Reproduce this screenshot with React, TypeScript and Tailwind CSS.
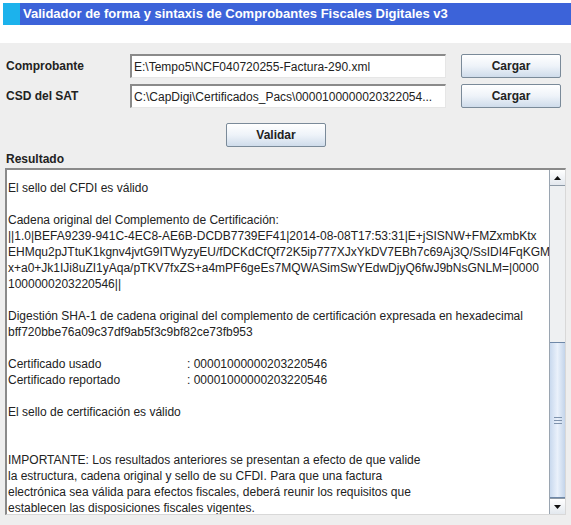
import React from 'react';

const lines: string[] = [
  'El sello del CFDI es válido',
  '',
  'Cadena original del Complemento de Certificación:',
  '||1.0|BEFA9239-941C-4EC8-AE6B-DCDB7739EF41|2014-08-08T17:53:31|E+jSISNW+FMZxmbKtx',
  'EHMqu2pJTtuK1kgnv4jvtG9ITWyzyEU/fDCKdCfQf72K5ip777XJxYkDV7EBh7c69Aj3Q/SsIDI4FqKGM',
  'x+a0+Jk1IJi8uZI1yAqa/pTKV7fxZS+a4mPF6geEs7MQWASimSwYEdwDjyQ6fwJ9bNsGNLM=|0000',
  '1000000203220546||',
  '',
  'Digestión SHA-1 de cadena original del complemento de certificación expresada en hexadecimal',
  'bff720bbe76a09c37df9ab5f3c9bf82ce73fb953',
  '',
];

const tail: string[] = [
  '',
  'El sello de certificación es válido',
  '',
  '',
  'IMPORTANTE: Los resultados anteriores se presentan a efecto de que valide',
  'la estructura, cadena original y sello de su CFDI. Para que una factura',
  'electrónica sea válida para efectos fiscales, deberá reunir los requisitos que',
  'establecen las disposiciones fiscales vigentes.',
];

const btn =
  'h-[24px] border border-[#7a8a99] rounded-[2px] bg-gradient-to-b from-[#ffffff] via-[#eef3f9] to-[#cfdceb] text-[12px] font-bold text-[#222] flex items-center justify-center';

const field =
  'h-[24px] bg-white border-t-2 border-l-2 border-t-[#8a8a8a] border-l-[#8a8a8a] border-r border-b border-r-[#e6e6e6] border-b-[#e6e6e6] px-[2px] text-[12px] text-[#222] flex items-center whitespace-nowrap overflow-hidden';

function Row({ label, value }: { label: string; value: string }) {
  return (
    <div className="flex items-center h-[24px]">
      <div className="w-[130px] pl-[6px] text-[12px] font-bold text-[#222]">{label}</div>
      <div className={`${field} w-[316px]`}>{value}</div>
      <div className="w-[15px]" />
      <button className={`${btn} w-[100px]`}>Cargar</button>
    </div>
  );
}

function ScrollBar() {
  return (
    <div className="w-[16px] flex flex-col border-l border-[#9aa5b1] bg-[#eef0f2]">
      <div className="h-[16px] border-b border-[#8d99a6] bg-gradient-to-b from-white to-[#e3e8ee] flex items-center justify-center">
        <svg width="7" height="4" viewBox="0 0 7 4"><path d="M0 4 L3.5 0 L7 4 Z" fill="#111" /></svg>
      </div>
      <div className="h-[156px]" />
      <div className="flex-1 border-y border-[#6f88a8] bg-gradient-to-r from-[#c9d9ee] via-[#eaf1fb] to-[#c3d4ea] flex items-center justify-center">
        <div className="flex flex-col gap-[2px]">
          <div className="w-[8px] h-px bg-[#7f93ad]" />
          <div className="w-[8px] h-px bg-[#7f93ad]" />
          <div className="w-[8px] h-px bg-[#7f93ad]" />
        </div>
      </div>
      <div className="h-[16px] border-t border-[#8d99a6] bg-gradient-to-b from-white to-[#e3e8ee] flex items-center justify-center">
        <svg width="7" height="4" viewBox="0 0 7 4"><path d="M0 0 L7 0 L3.5 4 Z" fill="#111" /></svg>
      </div>
    </div>
  );
}

export default function App() {
  return (
    <div className="w-[571px] h-[525px] bg-white flex flex-col font-['Liberation_Sans',Arial,sans-serif] overflow-hidden">
      <div className="pt-[3px] pl-[3px] h-[43px]">
        <div className="flex h-[22px]">
          <div className="w-[17px] bg-[#1cb2ec]" />
          <div className="flex-1 bg-[#3c63d9] flex items-center pl-[3px] text-white font-bold text-[13px]">
            Validador de forma y sintaxis de Comprobantes Fiscales Digitales v3
          </div>
        </div>
      </div>

      <div className="flex-1 bg-[#eeeeee] flex flex-col">
        <div className="pt-[11px] flex flex-col gap-[6px]">
          <Row label="Comprobante" value="E:\Tempo5\NCF040720255-Factura-290.xml" />
          <Row label="CSD del SAT" value="C:\CapDigi\Certificados_Pacs\0000100000020322054..." />
        </div>

        <div className="pt-[15px] pl-[226px]">
          <button className={`${btn} w-[100px]`}>Validar</button>
        </div>

        <div className="pt-[4px] pl-[6px] h-[20px] text-[12px] font-bold text-[#222] leading-[16px] flex items-end">Resultado</div>

        <div className="ml-[5px] mr-[5px] mt-[1px] h-[347px] flex bg-white border-t-2 border-l-2 border-t-[#8a8a8a] border-l-[#8a8a8a] border-r border-b border-r-[#d8d8d8] border-b-[#d8d8d8]">
          <div className="flex-1 pl-[1px] pt-[10px] text-[12px] leading-[16px] text-[#222] whitespace-pre overflow-hidden">
            {lines.map((l, i) => (
              <div key={i} className="h-[16px]">{l}</div>
            ))}
            <div className="h-[16px] flex">
              <span className="w-[179px]">Certificado usado</span>
              <span>: 00001000000203220546</span>
            </div>
            <div className="h-[16px] flex">
              <span className="w-[179px]">Certificado reportado</span>
              <span>: 00001000000203220546</span>
            </div>
            {tail.map((l, i) => (
              <div key={i} className="h-[16px]">{l}</div>
            ))}
          </div>
          <ScrollBar />
        </div>
      </div>
    </div>
  );
}
